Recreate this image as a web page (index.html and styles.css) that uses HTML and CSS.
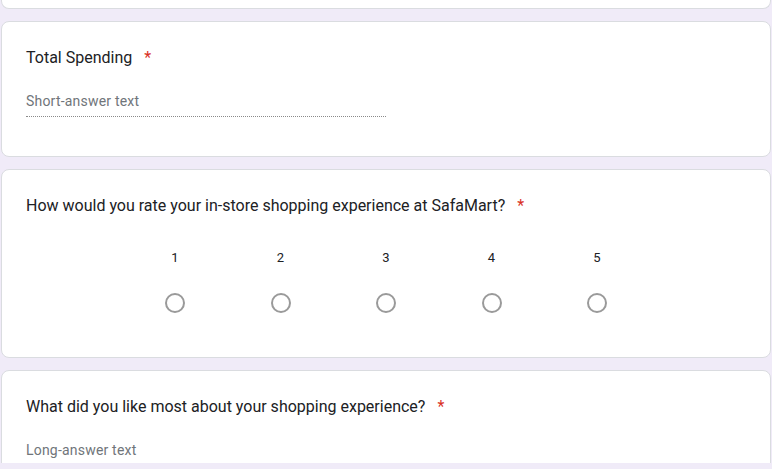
FILE: index.html
```html
<!DOCTYPE html>
<html lang="en">
<head>
<meta charset="utf-8">
<title>Form</title>
<link rel="stylesheet" href="styles.css">
</head>
<body>
<div class="viewport">
  <div class="card card-prev"></div>

  <div class="card">
    <div class="title">Total Spending<span class="req">*</span></div>
    <div class="short-answer">Short-answer text</div>
  </div>

  <div class="card">
    <div class="title">How would you rate your in-store shopping experience at SafaMart?<span class="req">*</span></div>
    <div class="scale">
      <div class="opt"><span class="num">1</span><span class="radio"></span></div>
      <div class="opt"><span class="num">2</span><span class="radio"></span></div>
      <div class="opt"><span class="num">3</span><span class="radio"></span></div>
      <div class="opt"><span class="num">4</span><span class="radio"></span></div>
      <div class="opt"><span class="num">5</span><span class="radio"></span></div>
    </div>
  </div>

  <div class="card card-last">
    <div class="title">What did you like most about your shopping experience?<span class="req">*</span></div>
    <div class="long-answer">Long-answer text</div>
  </div>
</div>
</body>
</html>
```

FILE: styles.css
```css
html, body {
  margin: 0;
  padding: 0;
  background: #f0ebf8;
}

body {
  font-family: Roboto, "Noto Sans", Arial, sans-serif;
  color: #202124;
}

.viewport {
  height: 463px;
  overflow: hidden;
  display: flex;
  flex-direction: column;
  gap: 12px;
  padding: 0 1px;
}

.card {
  flex: none;
  background: #fff;
  border: 1px solid #dadce0;
  border-radius: 8px;
  padding: 24px;
}

.card-prev {
  height: 9px;
  padding: 0;
  border-top: none;
  border-radius: 0 0 8px 8px;
  box-sizing: border-box;
}

.title {
  font-size: 16px;
  line-height: 24px;
  color: #202124;
}

.req {
  color: #d93025;
  margin-left: 12px;
}

.short-answer {
  width: 360px;
  margin-top: 20px;
  margin-bottom: 15px;
  font-size: 14px;
  line-height: 22px;
  letter-spacing: 0.2px;
  padding-bottom: 4px;
  color: #70757a;
  border-bottom: 1px dotted #8a8a8a;
}

.scale {
  display: flex;
  justify-content: center;
  margin-top: 31px;
  margin-bottom: 20px;
}

.opt {
  width: 105.5px;
  display: flex;
  flex-direction: column;
  align-items: center;
}

.num {
  font-size: 13px;
  line-height: 18px;
  color: #202124;
}

.radio {
  margin-top: 26px;
  width: 20px;
  height: 20px;
  box-sizing: border-box;
  border: 2px solid #9a9a9a;
  border-radius: 50%;
}

.long-answer {
  margin-top: 22px;
  font-size: 14px;
  line-height: 18px;
  letter-spacing: 0.2px;
  color: #70757a;
}

.card-last {
  height: 200px;
}
```
